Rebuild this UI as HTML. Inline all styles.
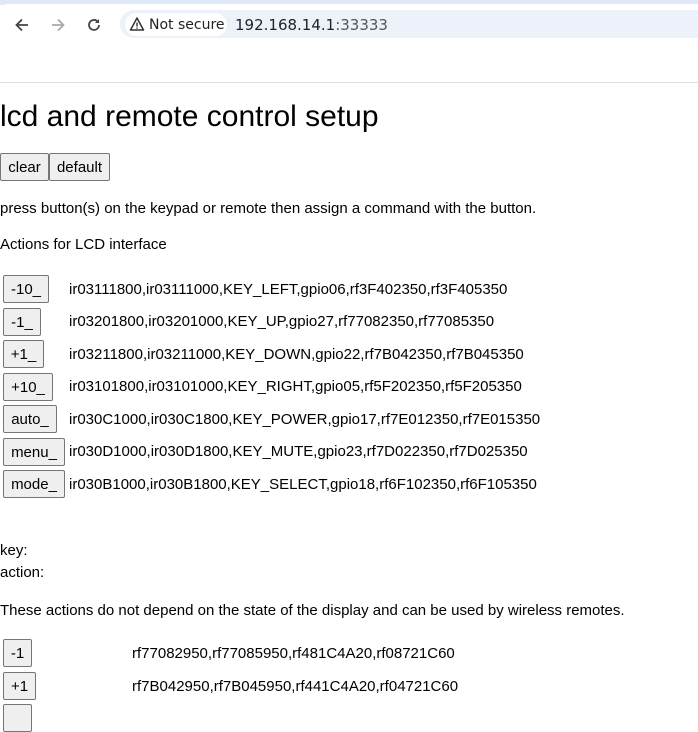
<!DOCTYPE html>
<html><head><style>
body{margin:0;width:698px;height:710px;overflow:hidden;font-family:"Liberation Sans",sans-serif;background:#fff;color:#000;position:relative}
.a{position:absolute;white-space:nowrap}
.t{font-size:15px;line-height:18px}
.b{position:absolute;font-family:"Liberation Sans",sans-serif;font-size:15px;background:#efefef;border:1px solid #767676;border-radius:2px;height:28px;box-sizing:border-box;padding:0;text-align:center;line-height:28px;color:#000}
</style></head><body>
<div class="a" style="left:0;top:0;width:698px;height:5px;background:#dfe8f7"></div>
<div class="a" style="left:0;top:4px;width:698px;height:78px;background:#fff;border-radius:8px 0 0 0"></div>
<div class="a" style="left:0;top:82px;width:698px;height:1px;background:#e0e0e0"></div>
<svg class="a" style="left:12px;top:15px" width="20" height="20" viewBox="0 0 20 20"><path d="M16 10H5M10 4.5L4.5 10 10 15.5" stroke="#444" stroke-width="1.8" fill="none"/></svg>
<svg class="a" style="left:48px;top:15px" width="20" height="20" viewBox="0 0 20 20"><path d="M4 10h11M10 4.5l5.5 5.5-5.5 5.5" stroke="#aaa" stroke-width="1.8" fill="none"/></svg>
<svg class="a" style="left:84px;top:15px" width="20" height="20" viewBox="0 0 20 20"><path d="M15 10a5 5 0 1 1-1.5-3.6" stroke="#444" stroke-width="1.8" fill="none"/><path d="M15 4v4h-4z" fill="#444"/></svg>
<div class="a" style="left:120px;top:10px;width:600px;height:28px;background:#edf1fa;border-radius:14px"></div>
<div class="a" style="left:125px;top:13px;width:102px;height:23px;background:#fff;border-radius:12px"></div>
<svg class="a" style="left:129px;top:16px" width="16" height="16" viewBox="0 0 16 16"><path d="M8 2L1.5 14h13z" stroke="#333" stroke-width="1.5" fill="none" stroke-linejoin="round"/><path d="M8 6.5v4M8 11.5v1.3" stroke="#333" stroke-width="1.4"/></svg>
<div class="a" style="left:149px;top:17px;font-size:14px;color:#222;font-family:'DejaVu Sans',sans-serif">Not secure</div>
<div class="a" style="left:235px;top:16px;font-size:15px;color:#222;font-family:'DejaVu Sans',sans-serif">192.168.14.1<span style="color:#555">:33333</span></div>

<div class="a" style="left:0;top:102px;font-size:30px;line-height:30px">lcd and remote control setup</div>
<div class="b" style="left:0;top:153px;width:49px">clear</div>
<div class="b" style="left:49px;top:153px;width:61px">default</div>
<div class="a t" style="left:0;top:200px">press button(s) on the keypad or remote then assign a command with the button.</div>
<div class="a t" style="left:0;top:236px">Actions for LCD interface</div>

<div class="b" style="left:3px;top:275px;width:46px">-10_</div><div class="a t" style="left:69px;top:281px">ir03111800,ir03111000,KEY_LEFT,gpio06,rf3F402350,rf3F405350</div>
<div class="b" style="left:3px;top:308px;width:38px">-1_</div><div class="a t" style="left:69px;top:313px">ir03201800,ir03201000,KEY_UP,gpio27,rf77082350,rf77085350</div>
<div class="b" style="left:3px;top:340px;width:41px">+1_</div><div class="a t" style="left:69px;top:346px">ir03211800,ir03211000,KEY_DOWN,gpio22,rf7B042350,rf7B045350</div>
<div class="b" style="left:3px;top:373px;width:50px">+10_</div><div class="a t" style="left:69px;top:378px">ir03101800,ir03101000,KEY_RIGHT,gpio05,rf5F202350,rf5F205350</div>
<div class="b" style="left:3px;top:405px;width:54px">auto_</div><div class="a t" style="left:69px;top:411px">ir030C1000,ir030C1800,KEY_POWER,gpio17,rf7E012350,rf7E015350</div>
<div class="b" style="left:3px;top:438px;width:62px">menu_</div><div class="a t" style="left:69px;top:443px">ir030D1000,ir030D1800,KEY_MUTE,gpio23,rf7D022350,rf7D025350</div>
<div class="b" style="left:3px;top:470px;width:62px">mode_</div><div class="a t" style="left:69px;top:476px">ir030B1000,ir030B1800,KEY_SELECT,gpio18,rf6F102350,rf6F105350</div>

<div class="a t" style="left:0;top:542px">key:</div>
<div class="a t" style="left:0;top:564px">action:</div>
<div class="a t" style="left:0;top:602px">These actions do not depend on the state of the display and can be used by wireless remotes.</div>
<div class="b" style="left:3px;top:639px;width:29px">-1</div><div class="a t" style="left:132px;top:645px">rf77082950,rf77085950,rf481C4A20,rf08721C60</div>
<div class="b" style="left:3px;top:672px;width:33px">+1</div><div class="a t" style="left:132px;top:678px">rf7B042950,rf7B045950,rf441C4A20,rf04721C60</div>
<div class="b" style="left:3px;top:704px;width:29px"></div>
</body></html>
